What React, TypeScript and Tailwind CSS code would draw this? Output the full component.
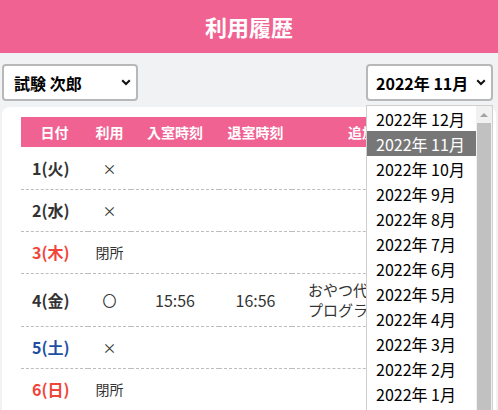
import React from "react";

// 利用履歴 screen: member select, month select (open), usage table
type Row = {
    day: string;
    tone: "normal" | "red" | "blue";
    use: string;
    inTime?: string;
    outTime?: string;
    extra?: string[];
};

const rows: Row[] = [
    { day: "1(火)", tone: "normal", use: "×" },
    { day: "2(水)", tone: "normal", use: "×" },
    { day: "3(木)", tone: "red", use: "閉所" },
    { day: "4(金)", tone: "normal", use: "〇", inTime: "15:56", outTime: "16:56", extra: ["おやつ代", "プログラム代"] },
    { day: "5(土)", tone: "blue", use: "×" },
    { day: "6(日)", tone: "red", use: "閉所" },
    { day: "7(月)", tone: "normal", use: "×" },
];

const months = [12, 11, 10, 9, 8, 7, 6, 5, 4, 3, 2, 1];

const toneClass = {
    normal: "text-[#333333]",
    red: "text-[#f0453a]",
    blue: "text-[#1f4fa3]",
};

const Chevron = () => (
    <svg width="10" height="7" viewBox="0 0 10 7" className="shrink-0">
        <path d="M1.2 1.2 5 5 8.8 1.2" fill="none" stroke="#111" strokeWidth="2" />
    </svg>
);

const App: React.FC = () => {
    return (
        <div
            className="h-[410px] w-[498px] overflow-hidden bg-[#f1f2f4]"
            style={{ fontFamily: '"Noto Sans CJK JP", "Noto Sans", sans-serif' }}
        >
            {/* Title bar */}
            <div className="flex h-[53px] items-center justify-center bg-[#f06292]">
                <h1 className="text-[22px] font-bold text-white">利用履歴</h1>
            </div>

            {/* Selectors */}
            <div className="flex justify-between px-[2px] pt-[11px]">
                <div className="flex h-[37px] w-[136px] items-center justify-between rounded-[4px] border-2 border-[#b8b8b8] bg-white pl-[10px] pr-[5px]">
                    <span className="text-[16px] font-bold text-black">試験 次郎</span>
                    <Chevron />
                </div>
                <div className="relative mr-[3px]">
                    <div className="flex h-[37px] w-[127px] items-center justify-between rounded-[4px] border-2 border-[#b8b8b8] bg-white pl-[8px] pr-[5px]">
                        <span className="text-[16px] font-bold text-black">2022年 11月</span>
                        <Chevron />
                    </div>
                    {/* Open month list */}
                    <div className="absolute left-0 top-full z-10 mt-[4px] flex h-[320px] w-[127px] overflow-hidden border border-[#cfcfcf] bg-white">
                        <ul className="flex-1">
                            {months.map((m) => (
                                <li
                                    key={m}
                                    className={
                                        m === 11
                                            ? "flex h-[25px] items-center bg-[#777777] pl-[9px] text-[16px] text-white"
                                            : "flex h-[25px] items-center pl-[9px] text-[16px] text-black"
                                    }
                                >
                                    2022年 {m}月
                                </li>
                            ))}
                        </ul>
                        <div className="flex w-[16px] flex-col items-center bg-[#f1f1f1]">
                            <div className="flex h-[17px] items-center justify-center">
                                <div className="h-0 w-0 border-x-[4px] border-b-[4px] border-x-transparent border-b-[#a3a3a3]" />
                            </div>
                            <div className="w-[14px] flex-1 bg-[#c1c1c1]" />
                        </div>
                    </div>
                </div>
            </div>

            {/* History card */}
            <div className="mx-[2px] mt-[6px] h-[320px] rounded-t-[8px] bg-white px-[19px] pt-[10px]">
                <table className="w-full table-fixed border-collapse">
                    <colgroup>
                        <col className="w-[67px]" />
                        <col className="w-[43px]" />
                        <col className="w-[88px]" />
                        <col className="w-[73px]" />
                        <col />
                    </colgroup>
                    <thead>
                        <tr className="h-[30px] bg-[#f06292] text-[14px] font-bold text-white">
                            <th className="text-center font-bold">日付</th>
                            <th className="text-center font-bold">利用</th>
                            <th className="text-center font-bold">入室時刻</th>
                            <th className="text-center font-bold">退室時刻</th>
                            <th className="pl-[56px] text-left font-bold">追加項目</th>
                        </tr>
                    </thead>
                    <tbody>
                        {rows.map((r) => (
                            <tr key={r.day} className="border-b border-dashed border-[#bdbdbd] text-[14px] text-[#333333]">
                                <td className={`h-[42px] py-[6px] pl-[11px] text-[16px] font-bold leading-5 ${toneClass[r.tone]}`}>
                                    {r.day}
                                </td>
                                <td className="py-[6px] text-center leading-5">{r.use}</td>
                                <td className="py-[6px] text-center text-[16px] leading-5">{r.inTime}</td>
                                <td className="py-[6px] text-center text-[16px] leading-5">{r.outTime}</td>
                                <td className="whitespace-nowrap py-[6px] pl-[16px] text-[15px] leading-5">
                                    {r.extra?.map((e) => (
                                        <div key={e}>{e}</div>
                                    ))}
                                </td>
                            </tr>
                        ))}
                    </tbody>
                </table>
            </div>
        </div>
    );
};

export default App;
